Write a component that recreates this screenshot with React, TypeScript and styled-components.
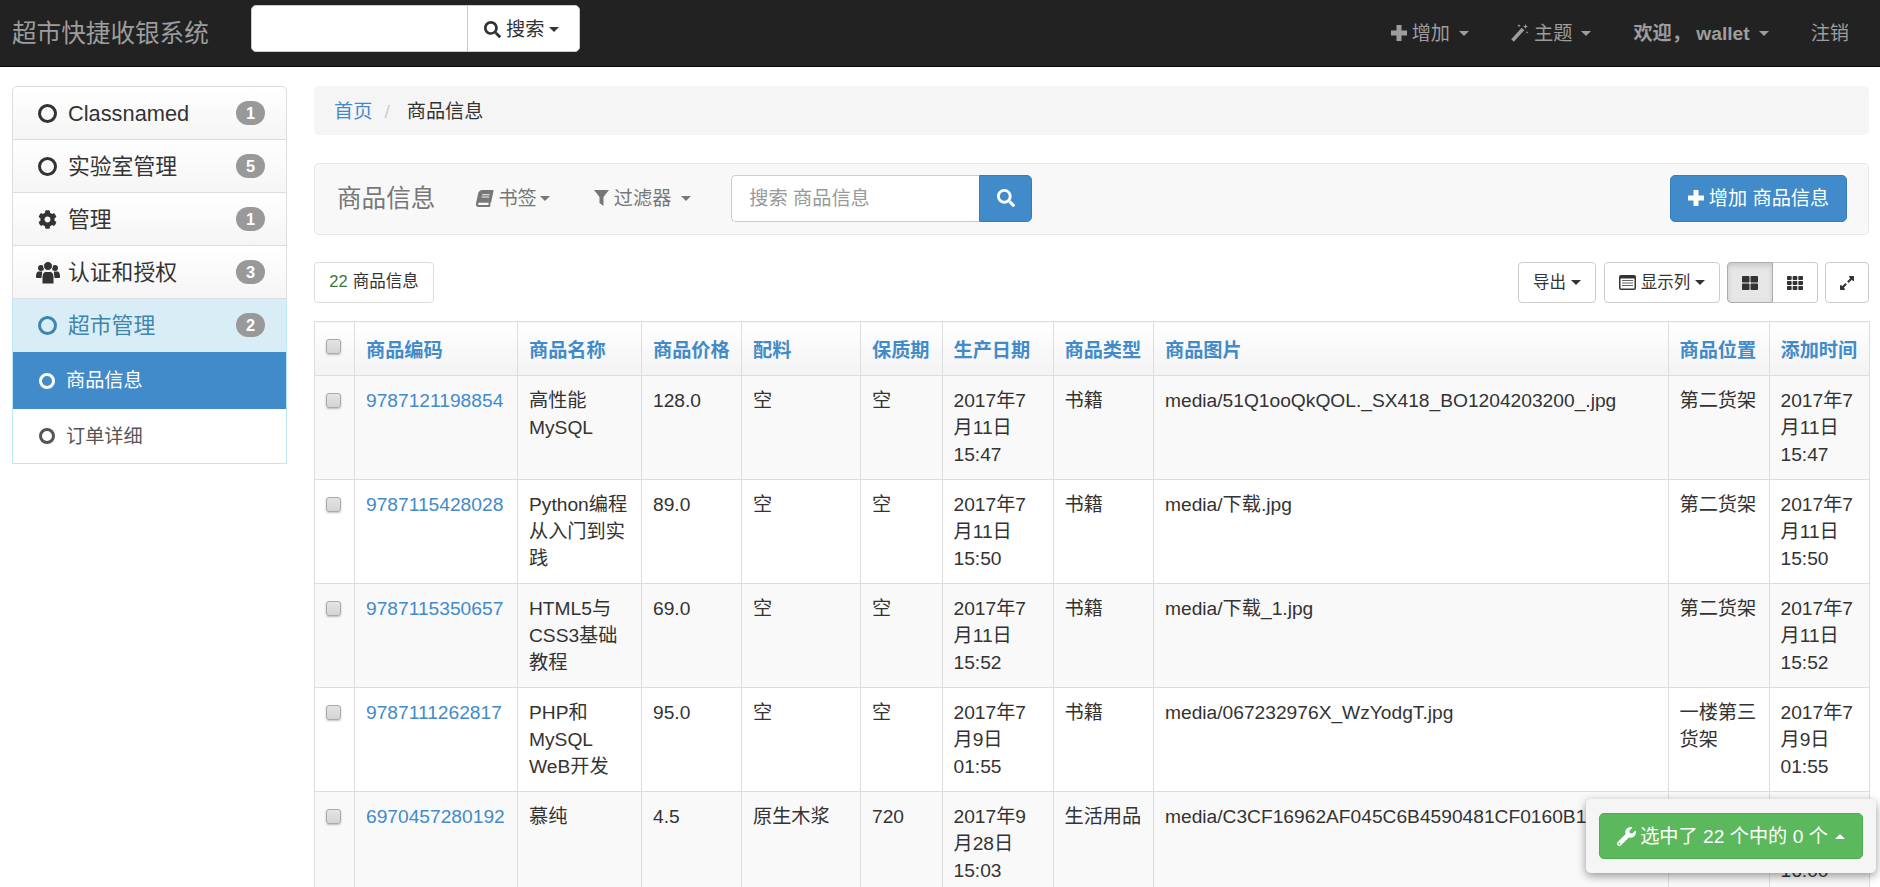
import React from "react";
import styled, { createGlobalStyle } from "styled-components";
import { FaSearch, FaBook, FaCog, FaWrench, FaThLarge, FaTh, FaExpandAlt } from "react-icons/fa";

const Global = createGlobalStyle`
  html, body { margin: 0; height: 100%; overflow: hidden; background: #fff; }
  body {
    font-family: "Liberation Sans", "Noto Sans CJK SC", sans-serif;
    font-size: 19.2px;
    line-height: 27px;
    color: #333;
  }
  * { box-sizing: border-box; }
`;

const Caret = styled.span<{ $up?: boolean; $color?: string; $ml?: number }>`
  display: inline-block;
  width: 0;
  height: 0;
  margin-left: ${(p) => p.$ml ?? 5}px;
  border-left: 5px solid transparent;
  border-right: 5px solid transparent;
  ${(p) => (p.$up ? "border-bottom" : "border-top")}: 5px solid ${(p) => p.$color ?? "currentColor"};
`;

const TopBar = styled.header`
  height: 67px;
  background: #222;
  border-bottom: 1px solid #080808;
  display: flex;
  align-items: center;
  white-space: nowrap;
`;
const Brand = styled.div`
  margin: 0 40px 0 12px;
  width: 199px;
  font-size: 24.6px;
  color: #9d9d9d;
`;
const TopSearch = styled.div`
  width: 329px;
  height: 47px;
  margin-top: -9px;
  background: #fff;
  border: 1px solid #ccc;
  border-radius: 5px;
  display: flex;
`;
const TopSearchInput = styled.div`
  width: 216px;
  border-right: 1px solid #ccc;
`;
const TopSearchButton = styled.div`
  flex: 1;
  display: flex;
  align-items: center;
  padding: 2px 0 0 16px;
  color: #333;
  svg { font-size: 17px; margin-right: 5px; }
`;
const TopNav = styled.nav`
  margin-left: auto;
  padding-right: 31px;
  display: flex;
  gap: 42px;
  color: #9d9d9d;
`;
const TopItem = styled.div<{ $bold?: boolean }>`
  display: flex;
  align-items: center;
  font-weight: ${(p) => (p.$bold ? 700 : 400)};
  svg { margin-right: 5px; }
  ${Caret} { margin-left: 9px; }
`;

const Page = styled.div`
  display: flex;
  align-items: flex-start;
  gap: 27px;
  padding: 19px 11px 0 12px;
`;

const Side = styled.aside`
  width: 275px;
  flex: none;
`;
const SideHead = styled.div<{ $first?: boolean; $active?: boolean }>`
  height: ${(p) => (p.$first ? 54 : 53)}px;
  display: flex;
  align-items: center;
  padding: 0 21px 0 25px;
  font-size: 21.8px;
  border: 1px solid ${(p) => (p.$active ? "#bce8f1" : "#ddd")};
  border-top-width: ${(p) => (p.$first ? 1 : 0)}px;
  border-radius: ${(p) => (p.$first ? "5px 5px 0 0" : "0")};
  border-bottom-color: ${(p) => (p.$active ? "#d9edf7" : "#ddd")};
  background: ${(p) => (p.$active ? "#d9edf7" : "linear-gradient(#fff, #f5f5f5)")};
  color: ${(p) => (p.$active ? "#3f86ad" : "#333")};
`;
const SideIcon = styled.span`
  width: 19px;
  margin-right: 11px;
  flex: none;
  display: flex;
  justify-content: center;
  svg { display: block; flex: none; }
`;
const SideLabel = styled.span`
  flex: 1;
`;
const Badge = styled.span`
  width: 29px;
  height: 24px;
  border-radius: 12px;
  background: #999;
  color: #fff;
  font-size: 16.3px;
  font-weight: 700;
  line-height: 24px;
  text-align: center;
`;
const SideChildren = styled.div`
  border: 1px solid #bce8f1;
  border-top: 0;
`;
const SideChild = styled.div<{ $selected?: boolean }>`
  height: ${(p) => (p.$selected ? 57 : 54)}px;
  display: flex;
  align-items: center;
  padding-left: 26px;
  background: ${(p) => (p.$selected ? "#428bca" : "#fff")};
  color: ${(p) => (p.$selected ? "#fff" : "#555")};
  svg { margin-right: 11px; }
`;

const Main = styled.main`
  flex: 1;
  min-width: 0;
`;
const Crumbs = styled.div`
  height: 49px;
  margin-bottom: 28px;
  padding: 2px 0 0 20px;
  background: #f5f5f5;
  border-radius: 5px;
  display: flex;
  align-items: center;
`;
const CrumbLink = styled.span`
  color: #428bca;
`;
const CrumbSep = styled.span`
  color: #ccc;
  margin: 0 17px 0 12px;
`;

const Panel = styled.section`
  height: 72px;
  margin-bottom: 27px;
  padding: 0 21px 2px 22px;
  background: #f8f8f8;
  border: 1px solid #e7e7e7;
  border-radius: 5px;
  display: flex;
  align-items: center;
  color: #777;
  white-space: nowrap;
`;
const PanelTitle = styled.div`
  font-size: 24.6px;
  margin-right: 41px;
`;
const PanelMenu = styled.div<{ $mr: number; $caret: number }>`
  display: flex;
  align-items: center;
  margin-right: ${(p) => p.$mr}px;
  svg { margin-right: 5px; }
  ${Caret} { margin-left: ${(p) => p.$caret}px; }
`;
const SlantBook = styled(FaBook)`
  font-size: 17px;
  transform: skewX(-12deg);
  margin-right: 6px;
`;
const SearchGroup = styled.div`
  display: flex;
  width: 301px;
  height: 47px;
`;
const SearchInput = styled.div`
  width: 248px;
  border: 1px solid #ccc;
  border-right: 0;
  border-radius: 5px 0 0 5px;
  background: #fff;
  color: #999;
  padding-left: 17px;
  display: flex;
  align-items: center;
`;
const SearchBtn = styled.div`
  flex: 1;
  background: #428bca;
  border: 1px solid #357ebd;
  border-radius: 0 5px 5px 0;
  color: #fff;
  display: flex;
  align-items: center;
  justify-content: center;
  svg { font-size: 18px; }
`;
const AddBtn = styled.div`
  margin-left: auto;
  width: 177px;
  height: 47px;
  background: #428bca;
  border: 1px solid #357ebd;
  border-radius: 5px;
  color: #fff;
  display: flex;
  align-items: center;
  justify-content: center;
  svg { margin-right: 5px; }
`;

const Tools = styled.div`
  height: 41px;
  margin-bottom: 18px;
  display: flex;
  align-items: stretch;
  font-size: 16.5px;
`;
const Count = styled.div`
  width: 120px;
  padding-bottom: 2px;
  border: 1px solid #ddd;
  border-radius: 4px;
  display: flex;
  align-items: center;
  justify-content: center;
  margin-right: auto;
`;
const CountNum = styled.span`
  color: #3c763d;
  margin-right: 5px;
`;
const ToolBtn = styled.div<{ $w: number; $pressed?: boolean; $joined?: "l" | "r"; $gap?: number }>`
  width: ${(p) => p.$w}px;
  background: ${(p) => (p.$pressed ? "#e6e6e6" : "#fff")};
  box-shadow: ${(p) => (p.$pressed ? "inset 0 3px 5px rgba(0,0,0,.125)" : "none")};
  border: 1px solid ${(p) => (p.$pressed ? "#adadad" : "#ccc")};
  border-radius: ${(p) => (p.$joined === "l" ? "4px 0 0 4px" : p.$joined === "r" ? "0 4px 4px 0" : "4px")};
  ${(p) => (p.$joined === "r" ? "border-left: 0;" : "")}
  display: flex;
  align-items: center;
  justify-content: center;
  color: #333;
  margin-left: ${(p) => p.$gap ?? (p.$joined === "r" ? 0 : 8)}px;
  svg { font-size: 16px; }
`;
const ColumnIcon = styled.span`
  display: flex;
  margin-right: 5px;
`;

const Table = styled.table`
  width: 100%;
  table-layout: fixed;
  border-collapse: collapse;
  border: 1px solid #ddd;
`;
const Th = styled.th`
  padding: 15px 9px 11px 11px;
  border: 1px solid #ddd;
  text-align: left;
  font-weight: 700;
  color: #428bca;
  vertical-align: top;
  white-space: nowrap;
  background: linear-gradient(#fff, #f3f3f3);
`;
const Row = styled.tr<{ $odd: boolean }>`
  background: ${(p) => (p.$odd ? "#f9f9f9" : "#fff")};
`;
const Td = styled.td`
  padding: 11px 9px 11px 11px;
  border: 1px solid #ddd;
  vertical-align: top;
  word-break: normal;
`;
const CheckCell = styled.td`
  padding: 17px 0 0 11px;
  border: 1px solid #ddd;
  vertical-align: top;
`;
const CheckHead = styled(Th)`
  padding: 17px 0 0 11px;
`;
const Check = styled.input.attrs({ type: "checkbox" })`
  appearance: none;
  display: block;
  width: 15px;
  height: 15px;
  margin: 0;
  border: 1px solid #aaa;
  border-radius: 3px;
  background: linear-gradient(#e4e4e4, #d4d4d4);
  box-shadow: 0 1px 2px rgba(0, 0, 0, 0.25);
`;
const Code = styled.span`
  color: #428bca;
`;

const ActionDock = styled.div`
  position: fixed;
  left: 1586px;
  top: 799px;
  width: 290px;
  height: 74px;
  padding: 14px 13px;
  background: #f5f5f5;
  border-radius: 5px;
  box-shadow: 0 3px 10px rgba(0, 0, 0, 0.4);
`;
const ActionBtn = styled.div`
  height: 46px;
  background: #5cb85c;
  border: 1px solid #4cae4c;
  border-radius: 5px;
  color: #fff;
  display: flex;
  align-items: center;
  justify-content: center;
  white-space: nowrap;
  svg { font-size: 19px; margin-right: 4px; }
  ${Caret} { margin-left: 7px; }
`;

const Ring = ({ size, width }: { size: number; width: number }) => (
  <svg width={size} height={size} viewBox={`0 0 ${size} ${size}`}>
    <circle cx={size / 2} cy={size / 2} r={(size - width) / 2} fill="none" stroke="currentColor" strokeWidth={width} />
  </svg>
);
const Plus = () => (
  <svg width="16" height="16" viewBox="0 0 16 16">
    <path d="M5.5 0h5v5.5H16v5h-5.500V16h-5v-5.500H0v-5h5.500z" fill="currentColor" />
  </svg>
);
const Wand = () => (
  <svg width="18" height="18" viewBox="0 0 18 18">
    <path d="M1.500 16.500L12 5" stroke="currentColor" strokeWidth="3.500" fill="none" />
    <path d="M14.500 0l.7 1.800 1.800.7-1.800.7-.7 1.800-.7-1.800-1.800-.7 1.800-.7zM8 0l.5 1.200 1.200.5-1.200.5L8 3.400l-.5-1.200-1.200-.5 1.200-.5zM16 7l.4 1 1 .4-1 .4-.4 1-.4-1-1-.4 1-.4z" fill="currentColor" />
  </svg>
);
const Funnel = () => (
  <svg width="15" height="16" viewBox="0 0 15 16">
    <path d="M0 0h15L9.500 7v9l-4-3V7z" fill="currentColor" />
  </svg>
);
const Team = () => (
  <svg width="24" height="23" viewBox="0 0 24 23">
    <g fill="currentColor">
      <circle cx="5" cy="7" r="3" />
      <circle cx="19" cy="7" r="3" />
      <path d="M0 16c0-4 1-5.500 3-5.500h3V17H1.500C.5 17 0 16.800 0 16zM24 16c0-4-1-5.500-3-5.500h-3V17h4.500c1 0 1.500-.2 1.500-1z" />
      <circle cx="12" cy="5" r="4.500" stroke="#fafafa" strokeWidth="1" />
      <path d="M6 23v-6c0-4 1.500-6.500 4-6.500h4c2.500 0 4 2.500 4 6.500v6z" stroke="#fafafa" strokeWidth="1" />
    </g>
  </svg>
);
const ListBox = () => (
  <svg width="17" height="15" viewBox="0 0 17 15">
    <rect width="17" height="15" rx="2" fill="#333" />
    <rect x="1.500" y="3.500" width="14" height="10" fill="#fff" />
    <path d="M3 5.500h11M3 8h11M3 10.500h11" stroke="#666" strokeWidth="1.200" />
  </svg>
);

const widths = [40, 163, 124, 100, 119, 81.5, 111, 100.5, 514.5, 101, 100];
const heads = ["商品编码", "商品名称", "商品价格", "配料", "保质期", "生产日期", "商品类型", "商品图片", "商品位置", "添加时间"];
const rows = [
  ["9787121198854", "高性能MySQL", "128.0", "空", "空", "2017年7月11日 15:47", "书籍", "media/51Q1ooQkQOL._SX418_BO1204203200_.jpg", "第二货架", "2017年7月11日 15:47"],
  ["9787115428028", "Python编程从入门到实践", "89.0", "空", "空", "2017年7月11日 15:50", "书籍", "media/下载.jpg", "第二货架", "2017年7月11日 15:50"],
  ["9787115350657", "HTML5与CSS3基础教程", "69.0", "空", "空", "2017年7月11日 15:52", "书籍", "media/下载_1.jpg", "第二货架", "2017年7月11日 15:52"],
  ["9787111262817", "PHP和MySQL WeB开发", "95.0", "空", "空", "2017年7月9日 01:55", "书籍", "media/067232976X_WzYodgT.jpg", "一楼第三货架", "2017年7月9日 01:55"],
  ["6970457280192", "慕纯", "4.5", "原生木浆", "720", "2017年9月28日 15:03", "生活用品", "media/C3CF16962AF045C6B4590481CF0160B1.jpg", "一楼第三货架", "2017年9月28日 16:00"],
];

const sideItems = [
  { label: "Classnamed", n: 1, icon: <Ring size={19} width={3} /> },
  { label: "实验室管理", n: 5, icon: <Ring size={19} width={3} /> },
  { label: "管理", n: 1, icon: <FaCog size={19} /> },
  { label: "认证和授权", n: 3, icon: <Team /> },
];

export default function App() {
  return (
    <>
      <Global />
      <TopBar>
        <Brand>超市快捷收银系统</Brand>
        <TopSearch>
          <TopSearchInput />
          <TopSearchButton>
            <FaSearch />搜索<Caret />
          </TopSearchButton>
        </TopSearch>
        <TopNav>
          <TopItem><Plus />增加<Caret /></TopItem>
          <TopItem><Wand />主题<Caret /></TopItem>
          <TopItem $bold>欢迎， wallet<Caret /></TopItem>
          <TopItem>注销</TopItem>
        </TopNav>
      </TopBar>
      <Page>
        <Side>
          {sideItems.map((s, i) => (
            <SideHead key={s.label} $first={i === 0}>
              <SideIcon>{s.icon}</SideIcon>
              <SideLabel>{s.label}</SideLabel>
              <Badge>{s.n}</Badge>
            </SideHead>
          ))}
          <SideHead $active>
            <SideIcon><Ring size={19} width={3} /></SideIcon>
            <SideLabel>超市管理</SideLabel>
            <Badge>2</Badge>
          </SideHead>
          <SideChildren>
            <SideChild $selected><Ring size={16} width={3} />商品信息</SideChild>
            <SideChild><Ring size={16} width={3} />订单详细</SideChild>
          </SideChildren>
        </Side>
        <Main>
          <Crumbs>
            <CrumbLink>首页</CrumbLink>
            <CrumbSep>/</CrumbSep>
            商品信息
          </Crumbs>
          <Panel>
            <PanelTitle>商品信息</PanelTitle>
            <PanelMenu $mr={44} $caret={3}><SlantBook />书签<Caret /></PanelMenu>
            <PanelMenu $mr={40} $caret={10}><Funnel />过滤器<Caret /></PanelMenu>
            <SearchGroup>
              <SearchInput>搜索 商品信息</SearchInput>
              <SearchBtn><FaSearch /></SearchBtn>
            </SearchGroup>
            <AddBtn><Plus />增加 商品信息</AddBtn>
          </Panel>
          <Tools>
            <Count><CountNum>22</CountNum>商品信息</Count>
            <ToolBtn $w={78}>导出<Caret /></ToolBtn>
            <ToolBtn $w={116}><ColumnIcon><ListBox /></ColumnIcon>显示列<Caret /></ToolBtn>
            <ToolBtn $w={46} $pressed $joined="l" $gap={7}><FaThLarge /></ToolBtn>
            <ToolBtn $w={45} $joined="r"><FaTh /></ToolBtn>
            <ToolBtn $w={44} $gap={7}><FaExpandAlt /></ToolBtn>
          </Tools>
          <Table>
            <colgroup>
              {widths.map((w, i) => <col key={i} style={{ width: w }} />)}
            </colgroup>
            <thead>
              <tr>
                <CheckHead><Check /></CheckHead>
                {heads.map((h) => <Th key={h}>{h}</Th>)}
              </tr>
            </thead>
            <tbody>
              {rows.map((r, i) => (
                <Row key={r[0]} $odd={i % 2 === 0}>
                  <CheckCell><Check /></CheckCell>
                  {r.map((c, j) => (
                    <Td key={j}>{j === 0 ? <Code>{c}</Code> : c}</Td>
                  ))}
                </Row>
              ))}
            </tbody>
          </Table>
        </Main>
      </Page>
      <ActionDock>
        <ActionBtn><FaWrench />选中了 22 个中的 0 个<Caret $up /></ActionBtn>
      </ActionDock>
    </>
  );
}
